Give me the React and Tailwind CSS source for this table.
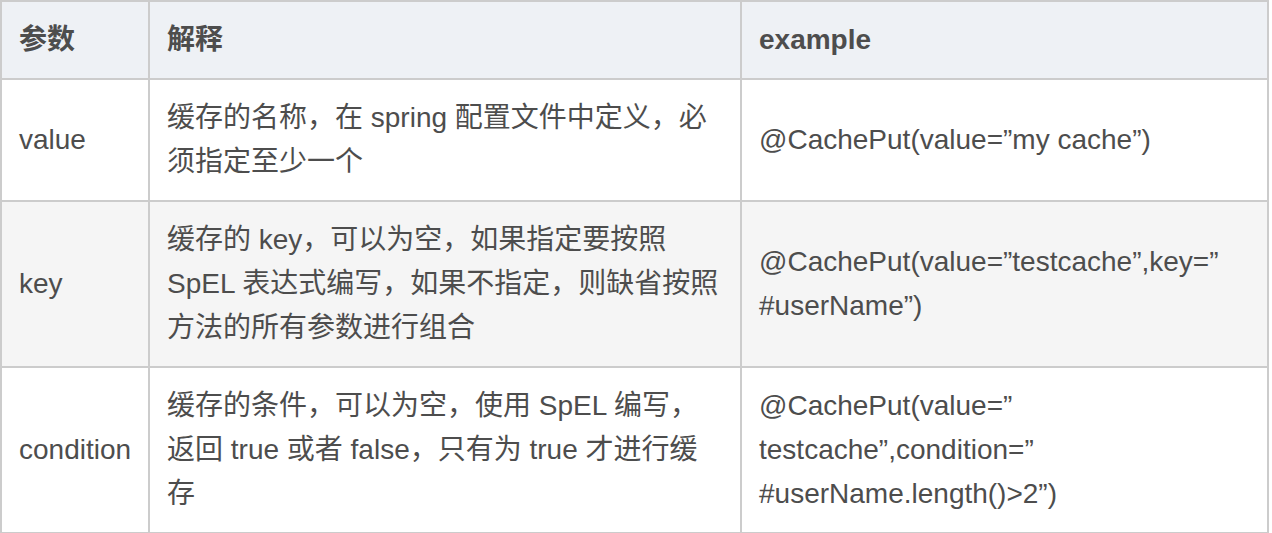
import React from "react";

const rows = [
  {
    name: "value",
    desc: ["缓存的名称，在 spring 配置文件中定义，必", "须指定至少一个"],
    ex: ["@CachePut(value=”my cache”)"],
    bg: "bg-white",
  },
  {
    name: "key",
    desc: [
      "缓存的 key，可以为空，如果指定要按照",
      "SpEL 表达式编写，如果不指定，则缺省按照",
      "方法的所有参数进行组合",
    ],
    ex: ["@CachePut(value=”testcache”,key=”", "#userName”)"],
    bg: "bg-[#f5f5f5]",
  },
  {
    name: "condition",
    desc: [
      "缓存的条件，可以为空，使用 SpEL 编写，",
      "返回 true 或者 false，只有为 true 才进行缓",
      "存",
    ],
    ex: ["@CachePut(value=”", "testcache”,condition=”", "#userName.length()>2”)"],
    bg: "bg-white",
  },
];

const cell = "border-2 border-[#cccccc] pl-[17px] pr-4 py-4 align-middle text-left";

const Lines = ({ items }) =>
  items.map((t, i) => (
    <React.Fragment key={i}>
      {t}
      {i < items.length - 1 && <br />}
    </React.Fragment>
  ));

export default function App() {
  return (
    <div
      className="w-[1272px] h-[533px] bg-white overflow-hidden text-[#4d4d4d] text-[28px] leading-[44px]"
      style={{ fontFamily: '"Liberation Sans", Arial, "Noto Sans CJK SC", sans-serif' }}
    >
      <table className="table-fixed border-collapse w-[1267px]">
        <colgroup>
          <col className="w-[148px]" />
          <col className="w-[592px]" />
          <col className="w-[527px]" />
        </colgroup>
        <thead>
          <tr className="bg-[#eef1f5] font-bold">
            <th className={cell}>参数</th>
            <th className={cell}>解释</th>
            <th className={cell}>example</th>
          </tr>
        </thead>
        <tbody>
          {rows.map((r) => (
            <tr key={r.name} className={r.bg}>
              <td className={cell}>{r.name}</td>
              <td className={`${cell} whitespace-nowrap`}>
                <Lines items={r.desc} />
              </td>
              <td className={`${cell} whitespace-nowrap`}>
                <Lines items={r.ex} />
              </td>
            </tr>
          ))}
        </tbody>
      </table>
    </div>
  );
}
